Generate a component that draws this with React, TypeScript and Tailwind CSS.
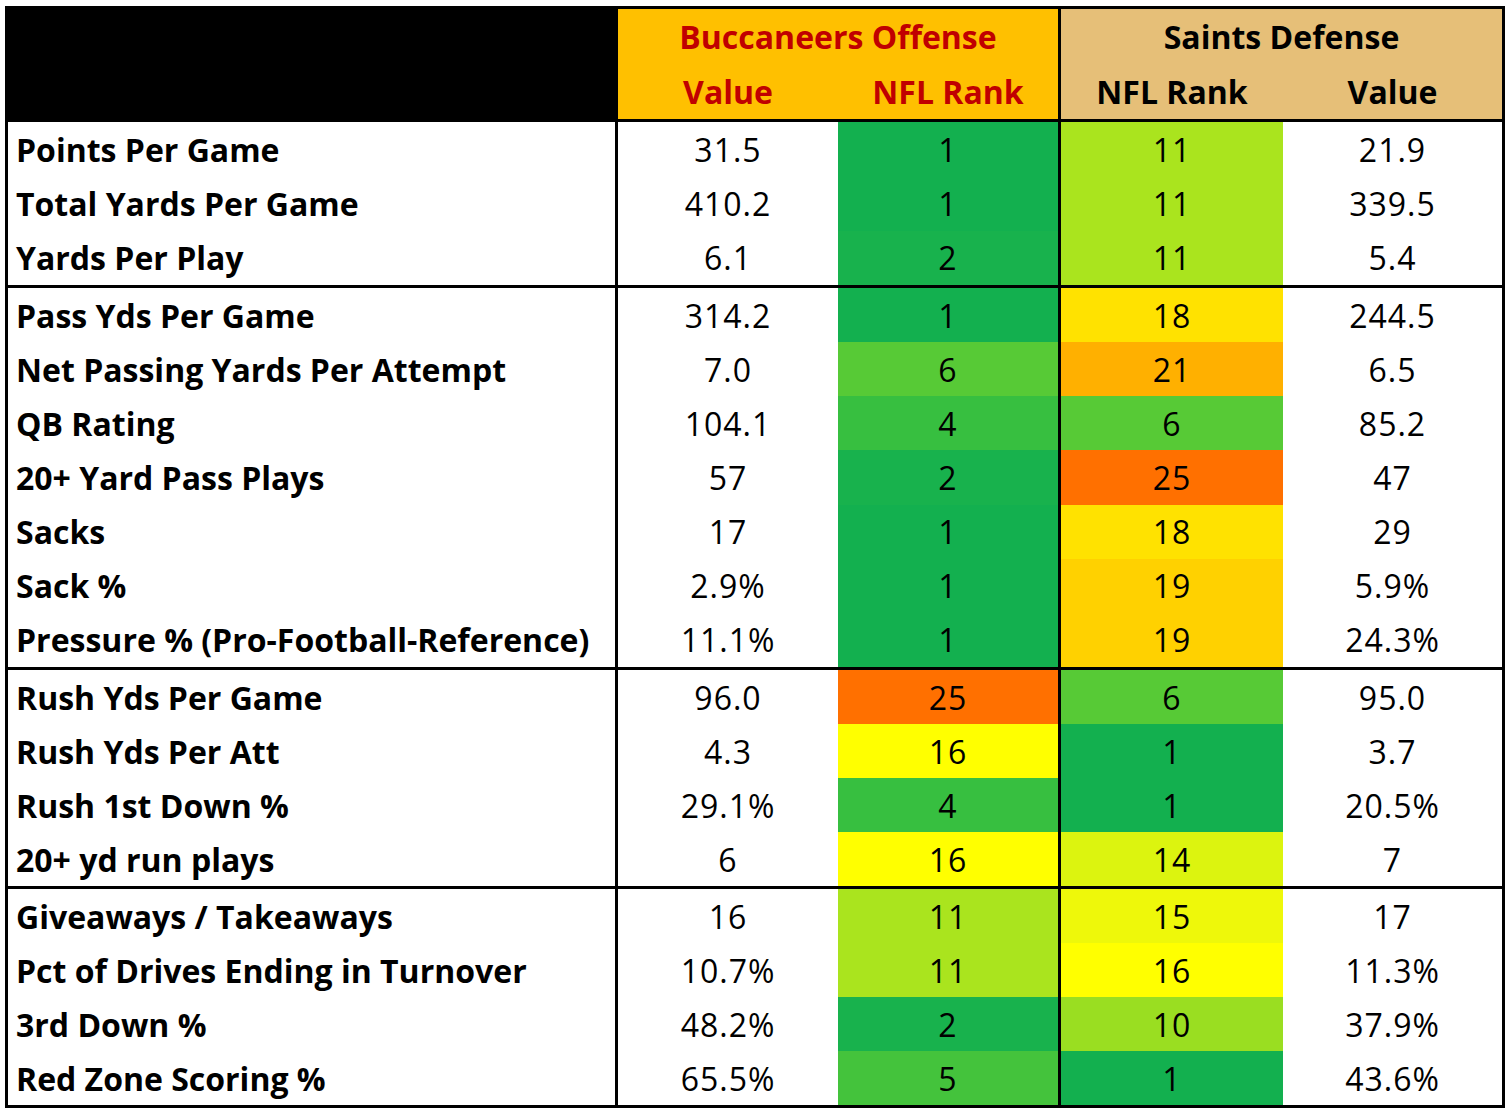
import React from 'react';

type Row = { label: string; ov: string; or: number; dr: number; dv: string };

const groups: { h: string; rows: Row[] }[] = [
  {
    h: 'h-[166px]',
    rows: [
      { label: 'Points Per Game', ov: '31.5', or: 1, dr: 11, dv: '21.9' },
      { label: 'Total Yards Per Game', ov: '410.2', or: 1, dr: 11, dv: '339.5' },
      { label: 'Yards Per Play', ov: '6.1', or: 2, dr: 11, dv: '5.4' },
    ],
  },
  {
    h: 'h-[382px]',
    rows: [
      { label: 'Pass Yds Per Game', ov: '314.2', or: 1, dr: 18, dv: '244.5' },
      { label: 'Net Passing Yards Per Attempt', ov: '7.0', or: 6, dr: 21, dv: '6.5' },
      { label: 'QB Rating', ov: '104.1', or: 4, dr: 6, dv: '85.2' },
      { label: '20+ Yard Pass Plays', ov: '57', or: 2, dr: 25, dv: '47' },
      { label: 'Sacks', ov: '17', or: 1, dr: 18, dv: '29' },
      { label: 'Sack %', ov: '2.9%', or: 1, dr: 19, dv: '5.9%' },
      { label: 'Pressure % (Pro-Football-Reference)', ov: '11.1%', or: 1, dr: 19, dv: '24.3%' },
    ],
  },
  {
    h: 'h-[219px]',
    rows: [
      { label: 'Rush Yds Per Game', ov: '96.0', or: 25, dr: 6, dv: '95.0' },
      { label: 'Rush Yds Per Att', ov: '4.3', or: 16, dr: 1, dv: '3.7' },
      { label: 'Rush 1st Down %', ov: '29.1%', or: 4, dr: 1, dv: '20.5%' },
      { label: '20+ yd run plays', ov: '6', or: 16, dr: 14, dv: '7' },
    ],
  },
  {
    h: 'h-[216px]',
    rows: [
      { label: 'Giveaways / Takeaways', ov: '16', or: 11, dr: 15, dv: '17' },
      { label: 'Pct of Drives Ending in Turnover', ov: '10.7%', or: 11, dr: 16, dv: '11.3%' },
      { label: '3rd Down %', ov: '48.2%', or: 2, dr: 10, dv: '37.9%' },
      { label: 'Red Zone Scoring %', ov: '65.5%', or: 5, dr: 1, dv: '43.6%' },
    ],
  },
];

// excel colour scale, green -> yellow -> red
const rankBg: Record<number, string> = {
  1: 'bg-[#13b04f]',
  2: 'bg-[#18b24d]',
  4: 'bg-[#37bf40]',
  5: 'bg-[#44c33c]',
  6: 'bg-[#57ca36]',
  10: 'bg-[#9ade21]',
  11: 'bg-[#aae41e]',
  14: 'bg-[#dcf40f]',
  15: 'bg-[#eef80a]',
  16: 'bg-[#ffff00]',
  18: 'bg-[#ffe200]',
  19: 'bg-[#ffd100]',
  21: 'bg-[#ffb000]',
  25: 'bg-[#ff7000]',
};

const font = "font-['Open_Sans','Liberation_Sans',sans-serif]";

function StatRow({ r }: { r: Row }) {
  return (
    <div className="flex flex-1 text-[32px] text-black leading-none">
      <div className="w-[610px] border-r-[3px] border-black flex items-center pl-[8px] pt-[1px] font-bold whitespace-nowrap">
        {r.label}
      </div>
      <div className="w-[220px] flex items-center justify-center pt-[1px] tracking-[1px] bg-white">{r.ov}</div>
      <div
        className={`w-[223px] border-r-[3px] border-black flex items-center justify-center pt-[1px] tracking-[1px] ${rankBg[r.or]}`}
      >
        {r.or}
      </div>
      <div className={`w-[222px] flex items-center justify-center pt-[1px] tracking-[1px] ${rankBg[r.dr]}`}>{r.dr}</div>
      <div className="w-[219px] flex items-center justify-center pt-[1px] tracking-[1px] bg-white">{r.dv}</div>
    </div>
  );
}

export default function App() {
  return (
    <div className={`w-[1512px] h-[1116px] bg-white pt-[6px] pl-[5px] ${font}`}>
      <div className="w-[1500px] border-[3px] border-black bg-white">
        {/* header */}
        <div className="flex h-[113px] border-b-[3px] border-black text-[32px] font-bold leading-none">
          <div className="w-[610px] bg-black" />
          <div className="w-[443px] border-r-[3px] border-black bg-[#ffc000] text-[#c00000] flex flex-col">
            <div className="h-[55px] flex items-center justify-center">Buccaneers Offense</div>
            <div className="h-[55px] flex">
              <div className="w-[220px] flex items-center justify-center">Value</div>
              <div className="w-[220px] flex items-center justify-center">NFL Rank</div>
            </div>
          </div>
          <div className="w-[441px] bg-[#e6bf78] text-black flex flex-col">
            <div className="h-[55px] flex items-center justify-center">Saints Defense</div>
            <div className="h-[55px] flex">
              <div className="w-[222px] flex items-center justify-center">NFL Rank</div>
              <div className="w-[219px] flex items-center justify-center">Value</div>
            </div>
          </div>
        </div>

        {groups.map((g, i) => (
          <div
            key={i}
            className={`flex flex-col ${g.h} ${i < groups.length - 1 ? 'border-b-[3px] border-black' : ''}`}
          >
            {g.rows.map((r) => (
              <StatRow key={r.label} r={r} />
            ))}
          </div>
        ))}
      </div>
    </div>
  );
}
